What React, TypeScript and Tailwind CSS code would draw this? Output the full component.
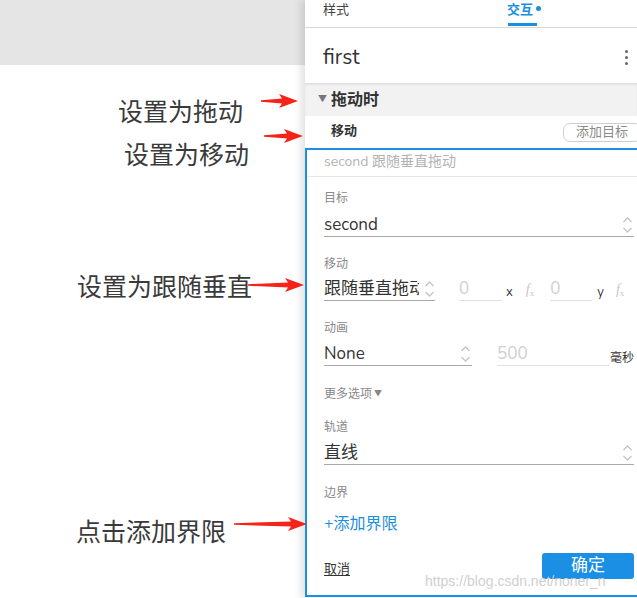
import React from "react";

const font = { fontFamily: '"Nunito", "Open Sans", "Noto Sans CJK SC", sans-serif' };
const cjk = { fontFamily: '"Noto Sans CJK SC", sans-serif' };

function Chevrons({ className = "" }: { className?: string }) {
  return (
    <svg width="11" height="20" viewBox="0 0 11 20" className={className} fill="none" stroke="#c4c4c4" strokeWidth="1.3">
      <path d="M1.5 7 L5.5 3 L9.5 7" />
      <path d="M1.5 13 L5.5 17 L9.5 13" />
    </svg>
  );
}

function Fx() {
  return (
    <span className="text-[14px] italic text-[#c8c8c8]" style={{ fontFamily: '"Liberation Serif", serif' }}>
      f<sub className="text-[9px] not-italic">x</sub>
    </span>
  );
}

function Arrow({ x1, x2, y }: { x1: number; x2: number; y: number }) {
  const len = x2 - x1;
  const head = 16;
  return (
    <svg
      className="absolute"
      style={{ left: x1, top: y - 9, width: len, height: 18 }}
      viewBox={`0 0 ${len} 18`}
    >
      <polygon
        points={`0,8.2 ${len - head},6.5 ${len - head - 3},2 ${len},9 ${len - head - 3},16 ${len - head},11.5 0,9.8`}
        fill="#f5241a"
      />
    </svg>
  );
}

export default function App() {
  return (
    <div className="relative flex h-[598px] w-[637px] overflow-hidden bg-white" style={font}>
      {/* left canvas */}
      <div className="relative w-[305px] shrink-0">
        <div className="h-[65px] bg-[#e5e5e5]" />
        <div className="absolute left-[118px] top-[94px] text-[25px] leading-[32px] text-[#3a3a3a]" style={cjk}>设置为拖动</div>
        <div className="absolute left-[124px] top-[137px] text-[25px] leading-[32px] text-[#3a3a3a]" style={cjk}>设置为移动</div>
        <div className="absolute left-[77px] top-[269px] text-[25px] leading-[32px] text-[#3a3a3a]" style={cjk}>设置为跟随垂直</div>
        <div className="absolute left-[76px] top-[514px] text-[25px] leading-[32px] text-[#3a3a3a]" style={cjk}>点击添加界限</div>
      </div>

      {/* right panel */}
      <div className="relative flex w-[332px] shrink-0 flex-col bg-white shadow-[-4px_0_8px_rgba(0,0,0,0.12)]">
        {/* tabs */}
        <div className="flex h-[28px] shrink-0 border-b border-[#d8d8d8] text-[13px]">
          <div className="pl-[18px] pt-[1px] text-[#444]">样式</div>
          <div className="relative ml-[158px] pt-[1px] font-semibold text-[#1a8fe0]">
            交互
            <span className="absolute -right-[8px] top-[6px] h-[5px] w-[5px] rounded-full bg-[#1a8fe0]" />
            <span className="absolute bottom-[1px] left-[1px] h-[3px] w-[29px] bg-[#1a8fe0]" />
          </div>
        </div>
        {/* title */}
        <div className="flex h-[55px] shrink-0 items-center justify-between pl-[18px] pr-[8px] pt-[4px]">
          <span className="text-[21px] text-[#333]">first</span>
          <div className="flex flex-col gap-[3px] pr-[1px]">
            <span className="h-[3px] w-[3px] rounded-full bg-[#666]" />
            <span className="h-[3px] w-[3px] rounded-full bg-[#666]" />
            <span className="h-[3px] w-[3px] rounded-full bg-[#666]" />
          </div>
        </div>
        {/* section header */}
        <div className="flex h-[33px] shrink-0 items-center border-t border-[#e0e0e0] bg-[#f2f2f2] pl-[13px] shadow-[inset_0_1px_2px_rgba(0,0,0,0.06)]">
          <span className="mr-[4px] text-[9px] text-[#777]">▼</span>
          <span className="text-[16px] font-bold text-[#333]">拖动时</span>
        </div>
        {/* action row */}
        <div className="flex h-[32px] shrink-0 items-center justify-between pl-[26px]">
          <span className="text-[13px] font-bold text-[#333]">移动</span>
          <span className="mr-[-4px] rounded-[7px] border border-[#cfcfcf] px-[12px] text-[13px] leading-[17px] text-[#8a8a8a]">添加目标</span>
        </div>
        {/* blue box */}
        <div className="mb-[1px] mr-[-4px] flex flex-1 flex-col border-2 border-[#1a8fe3]">
          <div className="h-[27px] shrink-0 border-b border-[#e6e6e6] pl-[17px] pt-[2px] text-[14px] leading-[20px] text-[#b3b3b3]">
            second 跟随垂直拖动
          </div>
          <div className="flex flex-col pl-[17px] pr-[5px]">
            {/* 目标 */}
            <div className="mt-[13px] text-[12px] leading-[16px] text-[#888]">目标</div>
            <div className="flex h-[31px] items-end justify-between border-b border-[#a8a8a8] pr-[1px]">
              <span className="text-[17px] leading-[22px] text-[#333]">second</span>
              <Chevrons className="mb-[1px]" />
            </div>
            {/* 移动 */}
            <div className="mt-[19px] text-[12px] leading-[16px] text-[#888]">移动</div>
            <div className="flex h-[29px] items-end">
              <div className="flex h-[29px] w-[111px] items-end justify-between border-b border-[#a8a8a8]">
                <span className="w-[95px] overflow-hidden whitespace-nowrap text-[17px] leading-[22px] text-[#333]">跟随垂直拖动</span>
                <Chevrons className="mb-[1px]" />
              </div>
              <div className="ml-[24px] flex h-[29px] w-[43px] items-end border-b border-[#e0e0e0] text-[17px] leading-[22px] text-[#cfcfcf]">0</div>
              <span className="mb-[1px] ml-[4px] text-[13px] leading-[16px] text-[#333]">x</span>
              <span className="ml-[13px]"><Fx /></span>
              <div className="ml-[16px] flex h-[29px] w-[42px] items-end border-b border-[#e0e0e0] text-[17px] leading-[22px] text-[#cfcfcf]">0</div>
              <span className="mb-[1px] ml-[5px] text-[13px] leading-[16px] text-[#333]">y</span>
              <span className="ml-[12px]"><Fx /></span>
            </div>
            {/* 动画 */}
            <div className="mt-[19px] text-[12px] leading-[16px] text-[#888]">动画</div>
            <div className="flex h-[30px] items-end">
              <div className="flex h-[30px] w-[148px] items-end justify-between border-b border-[#a8a8a8] pr-[1px]">
                <span className="text-[17px] leading-[22px] text-[#333]">None</span>
                <Chevrons className="mb-[1px]" />
              </div>
              <div className="ml-[25px] flex h-[30px] w-[112px] items-end border-b border-[#e0e0e0] text-[17px] leading-[22px] text-[#cfcfcf]">500</div>
              <span className="ml-[1px] text-[12px] leading-[16px] text-[#333]">毫秒</span>
            </div>
            {/* 更多选项 */}
            <div className="mt-[20px] flex items-center text-[12px] leading-[16px] text-[#888]">
              更多选项<span className="ml-[2px] text-[8px]">▼</span>
            </div>
            {/* 轨道 */}
            <div className="mt-[17px] text-[12px] leading-[16px] text-[#888]">轨道</div>
            <div className="flex h-[30px] items-end justify-between border-b border-[#a8a8a8] pr-[1px]">
              <span className="text-[17px] leading-[22px] text-[#333]">直线</span>
              <Chevrons className="mb-[1px]" />
            </div>
            {/* 边界 */}
            <div className="mt-[20px] text-[12px] leading-[16px] text-[#888]">边界</div>
            <div className="mt-[12px] text-[16px] leading-[22px] text-[#1a8fe0]">+添加界限</div>
            {/* footer */}
            <div className="mt-[17px] flex items-center justify-between">
              <span className="mt-[8px] text-[13px] text-[#333] underline underline-offset-2">取消</span>
              <span className="flex h-[26px] w-[92px] items-center justify-center rounded-[3px] bg-[#1a8fe3] text-[17px] text-white">确定</span>
            </div>
          </div>
        </div>
        <div className="pointer-events-none absolute left-[120px] top-[571px] text-[14px] text-[#d0d0d0]" style={{ fontFamily: '"Liberation Sans", sans-serif' }}>
          https://blog.csdn.net/noner_n
        </div>
      </div>

      {/* annotation arrows */}
      <Arrow x1={261} x2={298} y={101} />
      <Arrow x1={264} x2={303} y={136} />
      <Arrow x1={248} x2={304} y={285} />
      <Arrow x1={234} x2={307} y={524} />
    </div>
  );
}
